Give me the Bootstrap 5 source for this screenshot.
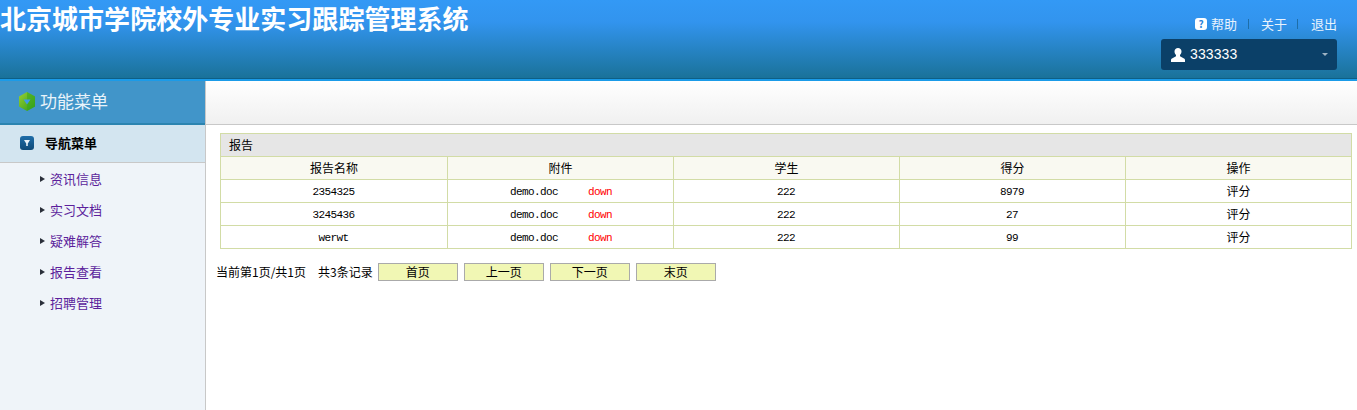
<!DOCTYPE html>
<html lang="zh-CN">
<head>
<meta charset="utf-8">
<title>北京城市学院校外专业实习跟踪管理系统</title>
<link href="https://cdn.jsdelivr.net/npm/bootstrap@5.3.0/dist/css/bootstrap.min.css" rel="stylesheet">
<style>
html,body{height:410px;overflow:hidden}
body{font-family:"Liberation Sans","Noto Sans CJK SC",sans-serif;font-size:12px;color:#000;background:#fff}
.top-head{height:81px;background:linear-gradient(#3399f5 0,#3294ee 22px,#1a7299 78px);border-bottom:2px solid #1b9be8;box-shadow:inset 0 -1px 0 #0e5f86}
.sys-title{font-family:"Noto Sans CJK SC",sans-serif;font-size:26px;line-height:36px;font-weight:700;color:#fff;margin:0;letter-spacing:.03px}
.head-side{width:176px;margin-right:20px;padding-top:15px}
.head-links{height:18px;font-size:13px;line-height:18px;font-family:"Noto Sans CJK SC",sans-serif}
.head-links a{color:#e8f3fd;text-decoration:none}
.head-sep{width:1px;height:10px;background:#1e6ea8}
.sep-a{margin:0 12px 0 11px}
.sep-b{margin:0 13px 0 10px}
.help-ico{width:12px;height:12px;background:#fff;border-radius:3px;color:#2a83d8;font-size:10px;line-height:12px;text-align:center;margin-right:4px;font-weight:700}
.user-box{height:31px;margin-top:6px;background:#0b4068;border-radius:3px;color:#fff;font-size:14px;padding:0 9px 0 10px;letter-spacing:.1px}
.user-ico{margin-right:5px}
.user-caret{width:0;height:0;border-left:3px solid transparent;border-right:3px solid transparent;border-top:3px solid #9fb4c4}
.page-body{height:329px}
.side-col{width:206px;background:#eff4f9;border-right:1px solid #c8c8c8;flex:none}
.side-head{height:44px;background:#4195c9;border-bottom:2px solid #2b84b0;padding:0 0 2px 18px;color:#e9f3fa;font-size:17px;font-family:"Noto Sans CJK SC",sans-serif}
.side-group{height:38px;background:#d3e5f0;border-bottom:1px solid #c8c8c8;padding:0 0 2px 20px;font-weight:700;font-size:13px;font-family:"Noto Sans CJK SC",sans-serif}
.group-ico{width:14px;height:14px;border-radius:3px;background:linear-gradient(#1e6da8,#0e4a78);margin-right:11px}
.side-link{height:31px;padding-left:40px;font-size:13px;font-family:"Noto Sans CJK SC",sans-serif}
.side-link a{color:#5c1f9c;text-decoration:none}
.tri{width:0;height:0;border-top:3.5px solid transparent;border-bottom:3.5px solid transparent;border-left:5px solid #2a2f3a;margin-right:5px}
.main-col{min-width:0}
.tool-strip{height:44px;background:linear-gradient(#fff,#f0f0f0);border-bottom:1px solid #c8c8c8}
.main-inner{padding:8px 5px 0 10px}
.rep-table{width:1132px;margin-left:4px;border-collapse:collapse;table-layout:fixed;font-family:"Noto Sans CJK SC",sans-serif}
.rep-table col{width:226px}
.rep-table col.col-first{width:227px}
.rep-table td{border:1px solid #d2dca6;height:23px;padding:0;text-align:center;font-weight:400;font-size:12px;line-height:16px;vertical-align:middle}
.rep-table .t-title{background:#e6e6e6;text-align:left;padding-left:8px}
.rep-table .t-head td{background:#f9f9f1}
.mono{font-family:"Liberation Mono",monospace;font-size:11px;letter-spacing:-.6px;line-height:12px;vertical-align:1px;padding-right:1px}
.file-name{padding-left:2px}
.down{color:#f00;margin-left:29px}
.pager{margin-top:13px;height:19px;font-family:"Noto Sans CJK SC",sans-serif;font-size:12px}
.pg-btn{width:80px;height:18px;background:#f1f7b4;border:1px solid #aaa;margin-left:6px;padding:0;font-size:12px;line-height:15px;color:#000;font-family:inherit}
.pg-first{margin-left:5px}
.pg-gap{margin-left:12px}
</style>
</head>
<body>
<header class="top-head d-flex justify-content-between">
  <h1 class="sys-title">北京城市学院校外专业实习跟踪管理系统</h1>
  <div class="head-side">
    <div class="head-links d-flex align-items-center justify-content-end">
      <span class="help-ico">?</span><a href="#">帮助</a><span class="head-sep sep-a"></span><a href="#">关于</a><span class="head-sep sep-b"></span><a href="#">退出</a>
    </div>
    <div class="user-box d-flex align-items-center">
      <svg width="14" height="14" viewBox="0 0 14 14" class="user-ico"><path d="M7 0c2 0 3.500 1.500 3.500 3.500 0 1.500-.7 2.800-1.500 3.500v1.300l4 2.200c.6.300 1 .8 1 1.500v2H0v-2c0-.7.400-1.200 1-1.500l4-2.200V7C4.200 6.300 3.500 5 3.500 3.500 3.500 1.500 5 0 7 0z" fill="#fff"/></svg>
      <span class="flex-grow-1">333333</span>
      <span class="user-caret"></span>
    </div>
  </div>
</header>
<div class="page-body d-flex">
  <aside class="side-col">
    <div class="side-head d-flex align-items-center">
      <svg width="18" height="19" viewBox="0 0 18 19" class="me-1"><defs><linearGradient id="hexg" x1="0" y1="0" x2="1" y2="1"><stop offset="0" stop-color="#9ad030"/><stop offset="1" stop-color="#2a9a1c"/></linearGradient></defs><path d="M9 0l8 4.500v10L9 19 1 14.500v-10z" fill="url(#hexg)"/><path d="M9 0l8 4.500v10L9 19z" fill="#38a81e" opacity=".55"/><path d="M5.500 7.500h7L9 12.500z" fill="#3f9be8"/></svg>
      <span>功能菜单</span>
    </div>
    <div class="side-group d-flex align-items-center">
      <span class="group-ico d-flex align-items-center justify-content-center"><svg width="6" height="7" viewBox="0 0 6 7"><path d="M0 1h6L3.800 4.500V7H2.200V4.500z" fill="#e6f1f8"/></svg></span>
      <span>导航菜单</span>
    </div>
    <div class="side-link d-flex align-items-center"><span class="tri"></span><a href="#">资讯信息</a></div>
    <div class="side-link d-flex align-items-center"><span class="tri"></span><a href="#">实习文档</a></div>
    <div class="side-link d-flex align-items-center"><span class="tri"></span><a href="#">疑难解答</a></div>
    <div class="side-link d-flex align-items-center"><span class="tri"></span><a href="#">报告查看</a></div>
    <div class="side-link d-flex align-items-center"><span class="tri"></span><a href="#">招聘管理</a></div>
  </aside>
  <main class="main-col flex-grow-1">
    <div class="tool-strip"></div>
    <div class="main-inner">
      <table class="rep-table">
        <colgroup><col class="col-first"><col><col><col><col></colgroup>
        <tr><td colspan="5" class="t-title">报告</td></tr>
        <tr class="t-head"><td>报告名称</td><td>附件</td><td>学生</td><td>得分</td><td>操作</td></tr>
        <tr><td><span class="mono">2354325</span></td><td><span class="mono file-name">demo.doc</span><a class="mono down text-decoration-none" href="#">down</a></td><td><span class="mono">222</span></td><td><span class="mono">8979</span></td><td>评分</td></tr>
        <tr><td><span class="mono">3245436</span></td><td><span class="mono file-name">demo.doc</span><a class="mono down text-decoration-none" href="#">down</a></td><td><span class="mono">222</span></td><td><span class="mono">27</span></td><td>评分</td></tr>
        <tr><td><span class="mono">werwt</span></td><td><span class="mono file-name">demo.doc</span><a class="mono down text-decoration-none" href="#">down</a></td><td><span class="mono">222</span></td><td><span class="mono">99</span></td><td>评分</td></tr>
      </table>
      <div class="pager d-flex align-items-center">
        <span>当前第1页/共1页</span><span class="pg-gap">共3条记录</span>
        <button class="pg-btn pg-first" type="button">首页</button><button class="pg-btn" type="button">上一页</button><button class="pg-btn" type="button">下一页</button><button class="pg-btn" type="button">末页</button>
      </div>
    </div>
  </main>
</div>
<script src="https://cdn.jsdelivr.net/npm/bootstrap@5.3.0/dist/js/bootstrap.bundle.min.js"></script>
</body>
</html>
